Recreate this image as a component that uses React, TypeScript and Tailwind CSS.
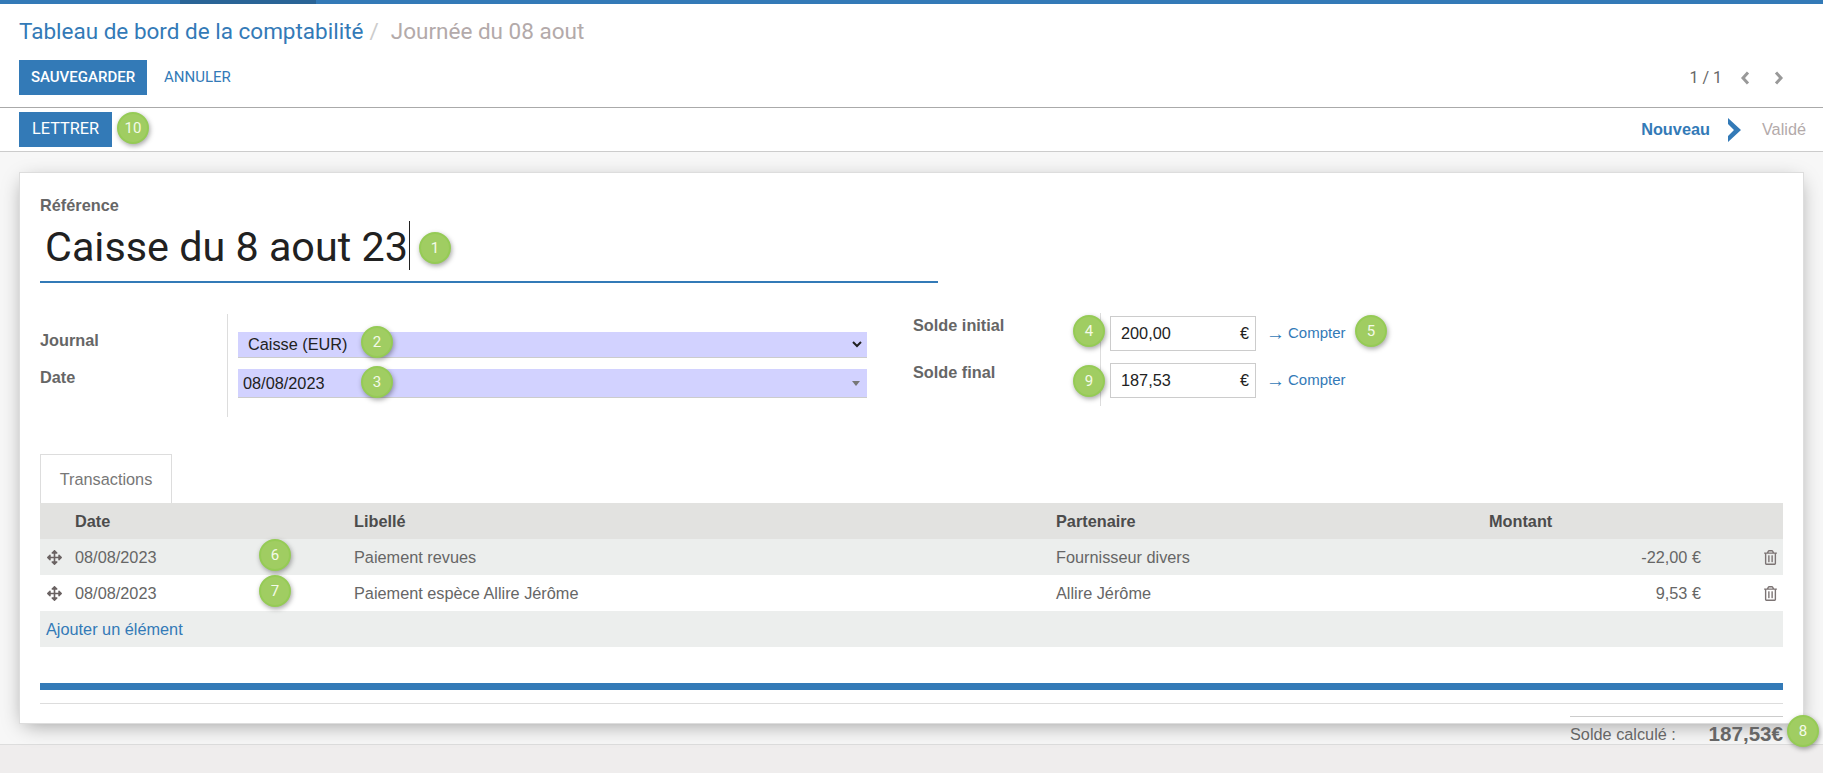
import React from "react";
import { FaArrowsAlt, FaRegTrashAlt } from "react-icons/fa";

function Badge({ n, className }: { n: string; className: string }) {
  return (
    <span
      className={
        "absolute flex h-8 w-8 items-center justify-center rounded-full border-2 border-[#95cb55] bg-[#a0cd62] text-[15px] text-[#f4fae8] shadow-[1px_2px_5px_rgba(0,0,0,0.35)] font-['Roboto',sans-serif] " +
        className
      }
    >
      {n}
    </span>
  );
}

function Compter() {
  return (
    <span className="ml-[10px] flex items-center text-[15px] text-[#337ab7]">
      <span className="mr-[3px] text-[19px] leading-none">→</span>Compter
    </span>
  );
}

function Pager({ d }: { d: string }) {
  return (
    <svg viewBox="0 0 10 14" className="h-[14px] w-[10px]">
      <path d={d} fill="none" stroke="#999" strokeWidth="3" />
    </svg>
  );
}

function Row({
  date,
  label,
  partner,
  amount,
  badge,
  striped,
}: {
  date: string;
  label: string;
  partner: string;
  amount: string;
  badge: string;
  striped: boolean;
}) {
  return (
    <tr className={(striped ? "bg-[#eceeed] " : "bg-white ") + "h-[36px] text-[16.3px] text-[#666]"}>
      <td className="pl-[7px] align-middle">
        <FaArrowsAlt className="h-[15px] w-[15px] text-[#6a6262]" />
      </td>
      <td className="relative align-middle">
        {date}
        <Badge n={badge} className="left-[184px] top-0" />
      </td>
      <td className="align-middle">{label}</td>
      <td className="align-middle">{partner}</td>
      <td className="pr-[20px] text-right align-middle">{amount}</td>
      <td className="align-middle">
        <FaRegTrashAlt className="ml-auto mr-[6px] h-[15px] w-[13px] text-[#7c7474]" />
      </td>
    </tr>
  );
}

export default function App() {
  return (
    <div className="flex h-[773px] flex-col overflow-hidden bg-[#efeded] font-['Liberation_Sans',Arial,sans-serif] text-[16.3px] text-[#666]">
      <div className="flex h-[4px] shrink-0 bg-[#337ab7]">
        <div className="ml-[180px] w-[136px] bg-[#2a6496]" />
      </div>

      <div className="h-[103px] shrink-0 bg-white px-[19px]">
        <div className="flex h-[56px] items-center pb-[1px] font-['Roboto',sans-serif] text-[22.5px]">
          <span className="text-[#337ab7]">Tableau de bord de la comptabilité</span>
          <span className="ml-[6px] text-[#ccc]">/</span>
          <span className="ml-[12px] text-[#b3aaaa]">Journée du 08 aout</span>
        </div>
        <div className="flex items-center font-['Roboto',sans-serif] text-[15px]">
          <button className="h-[35px] w-[128px] bg-[#337ab7] font-medium text-white">SAUVEGARDER</button>
          <button className="ml-[17px] text-[#337ab7]">ANNULER</button>
          <div className="ml-auto flex items-center pr-[20px] text-[16px] text-[#666]">
            <span>1 / 1</span>
            <div className="ml-[18px]">
              <Pager d="M8 1.5 L3 7 L8 12.5" />
            </div>
            <div className="ml-[24px]">
              <Pager d="M2 1.5 L7 7 L2 12.5" />
            </div>
          </div>
        </div>
      </div>

      <div className="flex h-[45px] shrink-0 items-center border-y border-t-[#aaa] border-b-[#ccc] bg-white px-[19px]">
        <div className="relative">
          <button className="h-[35px] w-[93px] bg-[#337ab7] font-['Roboto',sans-serif] text-[16.3px] text-white">LETTRER</button>
          <Badge n="10" className="left-[98px] top-0" />
        </div>
        <div className="-mr-[2px] ml-auto flex items-center">
          <span className="text-[16.3px] font-bold text-[#337ab7]">Nouveau</span>
          <svg viewBox="0 0 13 24" className="ml-[18px] h-[24px] w-[13px]">
            <path d="M0 0 L13 12 L0 24 L0 18 L6 12 L0 6 Z" fill="#337ab7" />
          </svg>
          <span className="ml-[21px] text-[16.3px] text-[#b3aaaa]">Validé</span>
        </div>
      </div>

      <div className="h-[593px] shrink-0 border-b border-[#ddd] bg-[#f7f7f7] px-[19px] pt-[20px]">
        <div className="relative h-[552px] border border-[#ddd] bg-white px-[20px] shadow-[0_5px_20px_-5px_rgba(0,0,0,0.4)]">
          <div className="pt-[23px] text-[16.3px] font-bold leading-[18px] text-[#666]">Référence</div>
          <div className="relative mt-[8px] h-[61px] w-[898px] border-b-2 border-[#337ab7] pl-[5px] font-['Roboto',sans-serif] text-[41.3px] leading-[50px] text-[#212121]">
            <span className="relative inline-block pr-[2px]">
              Caisse du 8 aout 23
              <span className="absolute -top-[1px] right-0 h-[49px] w-px bg-[#222]" />
              <Badge n="1" className="-right-[41px] top-[10px]" />
            </span>
          </div>

          <div className="mt-[31px] flex">
            <div className="flex w-[898px]">
              <div className="h-[103px] w-[188px] shrink-0 border-r border-[#ddd] pt-[17px] font-bold">
                <div className="h-[37px] leading-[18px]">Journal</div>
                <div className="leading-[18px]">Date</div>
              </div>
              <div className="ml-[10px] w-[629px] pt-[18px]">
                <div className="relative flex h-[26px] items-center justify-between border-b border-[#ccc] bg-[#d2d2ff] pl-[10px] pr-[5px] text-[#222]">
                  <span>Caisse (EUR)</span>
                  <svg viewBox="0 0 10 7" className="h-[7px] w-[10px]">
                    <path d="M1 1 L5 5 L9 1" fill="none" stroke="#222" strokeWidth="2" />
                  </svg>
                  <Badge n="2" className="left-[123px] -top-[6px]" />
                </div>
                <div className="relative mt-[11px] flex h-[29px] items-center justify-between border-b border-[#ccc] bg-[#d2d2ff] pl-[5px] pr-[7px] text-[#222]">
                  <span>08/08/2023</span>
                  <svg viewBox="0 0 8 5" className="h-[5px] w-[8px]">
                    <path d="M0 0 L8 0 L4 5 Z" fill="#777" />
                  </svg>
                  <Badge n="3" className="left-[123px] -top-[3px]" />
                </div>
              </div>
            </div>

            <div className="relative -mt-px ml-[-25px] flex">
              <div className="w-[187px] pt-[2px] font-bold">
                <div className="h-[48px] pt-[1px] leading-[18px]">Solde initial</div>
                <div className="leading-[18px]">Solde final</div>
              </div>
              <div className="h-[93px] border-l border-[#ddd] pl-[9px] pt-[3px]">
                <div className="flex h-[35px] items-center">
                  <div className="flex h-[35px] w-[146px] items-center justify-between border border-[#ccc] px-[10px] pr-[6px] text-[#222]">
                    <span>200,00</span>
                    <span>€</span>
                  </div>
                  <Compter />
                </div>
                <div className="mt-[12px] flex h-[35px] items-center">
                  <div className="flex h-[35px] w-[146px] items-center justify-between border border-[#ccc] px-[10px] pr-[6px] text-[#222]">
                    <span>187,53</span>
                    <span>€</span>
                  </div>
                  <Compter />
                </div>
              </div>
              <Badge n="4" className="left-[160px] top-[2px]" />
              <Badge n="9" className="left-[160px] top-[52px]" />
              <Badge n="5" className="left-[442px] top-[2px]" />
            </div>
          </div>

          <div className="mt-[37px] h-[49px] w-[132px] border border-b-0 border-[#ddd] bg-white text-center text-[16.3px] leading-[48px] text-[#777]">
            Transactions
          </div>

          <table className="w-[1743px] table-fixed border-collapse">
            <colgroup>
              <col className="w-[35px]" />
              <col className="w-[279px]" />
              <col className="w-[702px]" />
              <col className="w-[433px]" />
              <col className="w-[232px]" />
              <col className="w-[62px]" />
            </colgroup>
            <thead>
              <tr className="h-[36px] bg-[#e2e2e0] text-left text-[16.3px] font-bold text-[#4c4c4c]">
                <th />
                <th>Date</th>
                <th>Libellé</th>
                <th>Partenaire</th>
                <th>Montant</th>
                <th />
              </tr>
            </thead>
            <tbody>
              <Row date="08/08/2023" label="Paiement revues" partner="Fournisseur divers" amount="-22,00 €" badge="6" striped />
              <Row date="08/08/2023" label="Paiement espèce Allire Jérôme" partner="Allire Jérôme" amount="9,53 €" badge="7" striped={false} />
              <tr className="h-[36px] bg-[#eceeed]">
                <td colSpan={6} className="pl-[6px] text-[#337ab7]">Ajouter un élément</td>
              </tr>
            </tbody>
          </table>

          <div className="mt-[36px] h-[7px] bg-[#337ab7]" />
          <div className="mt-[13px] h-px bg-[#ddd]" />
          <div className="relative ml-auto mt-[12px] w-[213px] border-t border-[#ccc]">
            <div className="flex items-center justify-between pt-[4px] leading-[26px]">
              <span className="text-[16.3px] text-[#666]">Solde calculé :</span>
              <span className="text-[20.6px] font-bold text-[#666]">187,53€</span>
            </div>
            <Badge n="8" className="-right-[36px] -top-[2px]" />
          </div>
        </div>
      </div>
    </div>
  );
}
